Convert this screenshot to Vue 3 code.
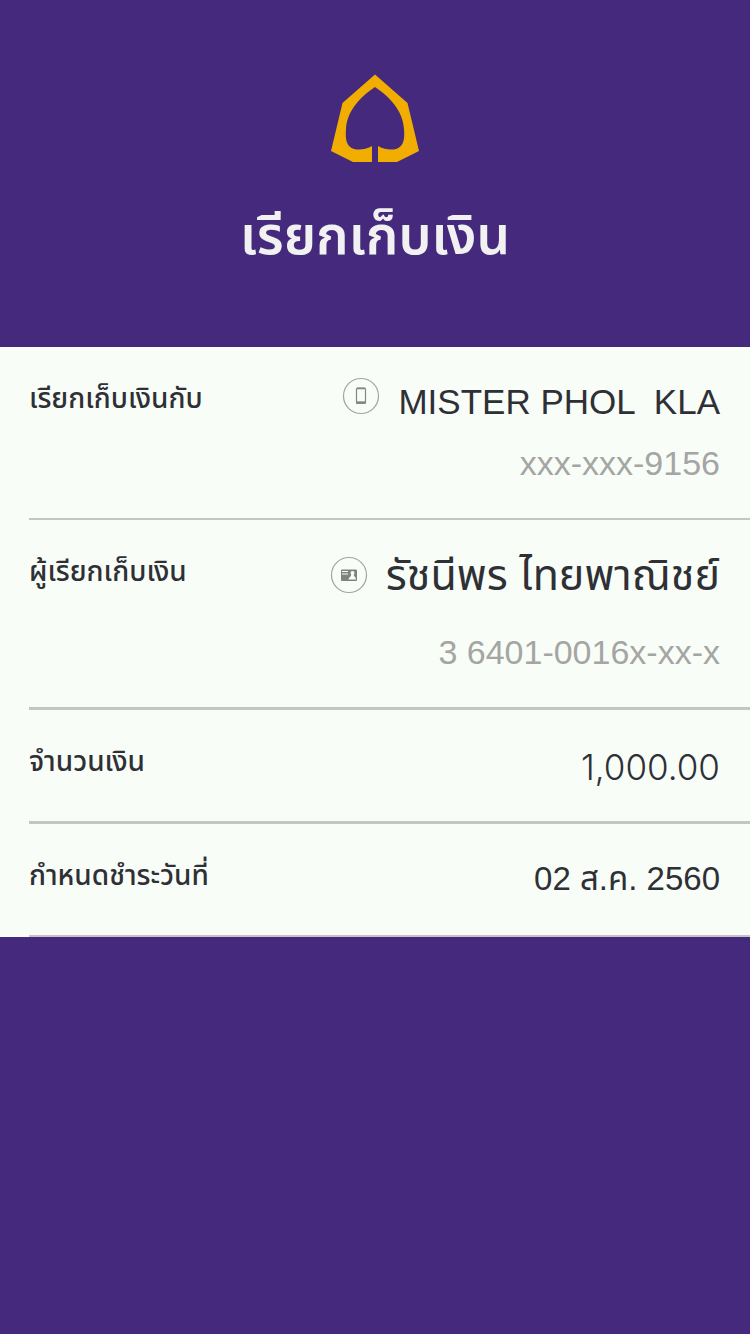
<template>
  <main class="bill">
    <header class="bill-header">
      <svg class="logo" viewBox="0 0 88 88" aria-hidden="true">
        <path
          fill="#f2ae00"
          d="M44 0.5 L76.5 29 L88 77 L66 88 H47 V72 C54 76 60 76 65 75 C72 73 74 66 73 55 C72 37 59 23 44 13 C29 23 16 37 15 55 C14 66 16 73 23 75 C28 76 34 76 41 72 V88 H22 L0 77 L11.5 29 Z"
        />
      </svg>
      <h1 class="title">เรียกเก็บเงิน</h1>
    </header>

    <dl class="details">
      <div v-for="row in rows" :key="row.label" class="row" :class="row.type">
        <dt class="label">{{ row.label }}</dt>
        <dd class="content">
          <div class="main-line">
            <svg v-if="row.icon" class="icon" viewBox="0 0 38 38" aria-hidden="true">
              <circle cx="19" cy="19" r="17.5" fill="none" stroke="#a2a4a2" stroke-width="1.2" />
              <g v-if="row.icon === 'phone'">
                <rect x="14.5" y="11" width="9" height="15.5" rx="1" fill="none" stroke="#858785" stroke-width="1.2" />
                <path d="M14.5 25.5 H23.5" stroke="#858785" stroke-width="2.4" />
                <path d="M15 11.5 H23" stroke="#858785" stroke-width="1.6" />
              </g>
              <g v-else>
                <rect x="11" y="13.5" width="16" height="11.5" rx="1" fill="#808280" />
                <path d="M12 15.5 H18 M12 18 H18" stroke="#f9fdf8" stroke-width="1.2" />
                <circle cx="22.5" cy="17" r="2" fill="#f9fdf8" />
                <path d="M18.5 23.5 C19 21 21 21 21.5 18 H23.5 C24 21 26 21 26 23.5 Z" fill="#f9fdf8" />
              </g>
            </svg>
            <span class="value">{{ row.value }}</span>
          </div>
          <div v-if="row.sub" class="sub">{{ row.sub }}</div>
        </dd>
      </div>
    </dl>
  </main>
</template>

<script setup>
import { ref } from 'vue';

const rows = ref([
  {
    type: 'payer',
    label: 'เรียกเก็บเงินกับ',
    icon: 'phone',
    value: 'MISTER PHOL  KLA',
    sub: 'xxx-xxx-9156'
  },
  {
    type: 'requester',
    label: 'ผู้เรียกเก็บเงิน',
    icon: 'card',
    value: 'รัชนีพร ไทยพาณิชย์',
    sub: '3 6401-0016x-xx-x'
  },
  { type: 'amount', label: 'จำนวนเงิน', value: '1,000.00' },
  { type: 'due', label: 'กำหนดชำระวันที่', value: '02 ส.ค. 2560' }
]);
</script>

<style>
body {
  background: #45297c;
}
</style>

<style scoped>
.bill {
  min-height: 100vh;
  background: #45297c;
  color: #2e3036;
  font-family: "Liberation Sans", "Noto Sans Thai", "Noto Sans", sans-serif;
}

.bill-header {
  display: flex;
  flex-direction: column;
  align-items: center;
  padding: 74px 30px 71px;
}

.logo {
  width: 88px;
  height: 88px;
}

.title {
  margin: 34px 0 0;
  color: #f1f1f1;
  font-size: 53px;
  font-weight: 600;
  line-height: 80px;
}

.details {
  margin: 0;
  padding-left: 29px;
  background: #f9fdf8;
}

.row {
  display: flex;
  justify-content: space-between;
  padding: 30px 30px 31px 0;
  border-bottom: 3px solid #c5c5c3;
}

.row:last-child {
  border-bottom-width: 2px;
}

.label {
  font-size: 28px;
  font-weight: 500;
  line-height: 44px;
  white-space: nowrap;
}

.content {
  margin: 0;
  text-align: right;
}

.main-line {
  display: flex;
  justify-content: flex-end;
  height: 50px;
}

.icon {
  width: 38px;
  height: 38px;
  margin-right: 18px;
}

.value {
  font-size: 35px;
  line-height: 50px;
  white-space: pre;
}

.sub {
  color: #a5a5a3;
  font-size: 34px;
  line-height: 40px;
}

.payer,
.requester {
  padding-bottom: 35px;
}

.payer {
  border-bottom-width: 2px;
}

.payer .sub {
  margin-top: 16px;
}

.requester .sub {
  margin-top: 32px;
}

.requester .main-line {
  align-items: center;
}

.requester .value {
  font-size: 43px;
}

.amount .value {
  font-family: Inter, "Liberation Sans", sans-serif;
  font-weight: 300;
  line-height: 54px;
}

.due .value {
  font-size: 33px;
}
</style>
